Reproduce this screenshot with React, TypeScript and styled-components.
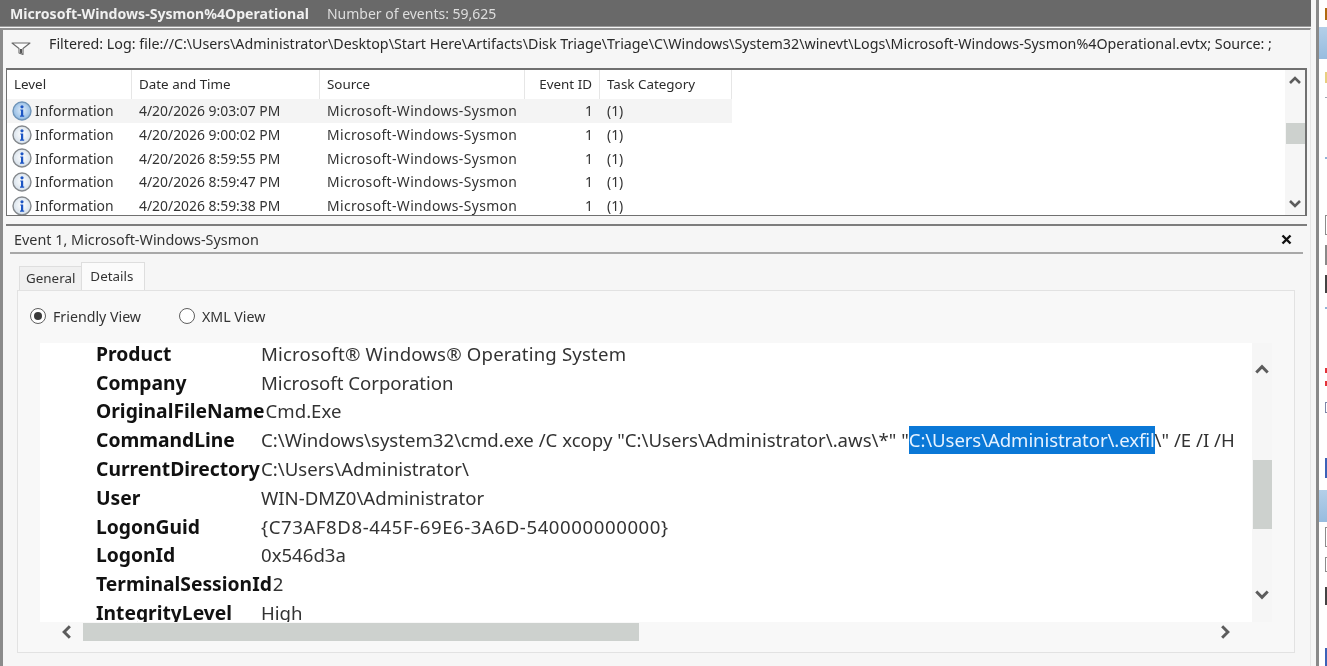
import styled, { createGlobalStyle } from "styled-components";
import { useId } from "react";

const Global = createGlobalStyle`
  html, body {
    margin: 0;
    padding: 0;
    background: #f6f6f6;
  }
`;

const Root = styled.div`
  display: flex;
  width: 1327px;
  height: 666px;
  overflow: hidden;
  font-family: "Noto Sans", "Open Sans", Arial, sans-serif;
  color: #2b2b2b;
  background: #f6f6f6;
  filter: blur(0.3px);
`;

const Main = styled.div`
  width: 1316px;
  flex: none;
  display: flex;
  flex-direction: column;
`;

const TitleBar = styled.div`
  height: 26px;
  flex: none;
  margin-right: 5px;
  display: flex;
  align-items: center;
  gap: 18px;
  padding-left: 10px;
  background: #696969;
  border-bottom: 1px solid #9a9a9a;
  font-size: 14px;
  color: #dedede;
`;

const TitleName = styled.span`
  font-weight: 700;
  color: #f0f0f0;
  font-size: 14.1px;
`;

const Body = styled.div`
  flex: 1;
  display: flex;
  flex-direction: column;
  width: 1311px;
  box-sizing: border-box;
  border-left: 3px solid #8b8b8b;
  border-right: 1px solid #e6e6e6;
  padding-left: 3px;
  padding-right: 3px;
  border-top: 2px solid #8f8f8f;
  margin-top: 1px;
  min-height: 0;
`;

const FilterBar = styled.div`
  height: 38px;
  flex: none;
  display: flex;
  gap: 18px;
  padding: 5px 0 0 5px;
  box-sizing: border-box;
  font-size: 14.25px;
  line-height: 18px;
  color: #2a2a2a;
  white-space: nowrap;
  svg {
    margin-top: 7px;
    flex: none;
  }
`;

const ListBox = styled.div`
  height: 148px;
  flex: none;
  box-sizing: border-box;
  display: flex;
  border: 1px solid #707070;
  border-top-width: 2px;
  border-right-width: 2px;
  background: #fff;
`;

const Table = styled.div`
  flex: 1;
  overflow: hidden;
`;

const Row = styled.div<{ $shade?: boolean }>`
  width: 725px;
  height: 23.7px;
  display: grid;
  grid-template-columns: 125px 188px 205px 75px 1fr;
  align-items: center;
  font-size: 13.9px;
  color: #333;
  background: ${(p) => (p.$shade ? "#f4f4f4" : "transparent")};
  white-space: nowrap;
`;

const HeaderRow = styled(Row)`
  height: 29px;
  font-size: 13.4px;
  color: #2b2b2b;
`;

const HeadCell = styled.div<{ $right?: boolean }>`
  height: 100%;
  display: flex;
  align-items: center;
  padding: 0 7px 2px;
  box-sizing: border-box;
  border-right: 1px solid #e6e6e6;
  justify-content: ${(p) => (p.$right ? "flex-end" : "flex-start")};
`;

const LevelCell = styled.div`
  display: flex;
  align-items: center;
  gap: 3px;
  padding-left: 5px;
`;

const Cell = styled.div<{ $right?: boolean; $wide?: boolean }>`
  padding: 0 7px;
  text-align: ${(p) => (p.$right ? "right" : "left")};
  letter-spacing: ${(p) => (p.$wide ? "0.38px" : "normal")};
`;

const VScroll = styled.div<{ $top: number }>`
  width: 20px;
  flex: none;
  display: flex;
  flex-direction: column;
  align-items: center;
  background: #f6f6f6;
  padding-top: ${(p) => p.$top}px;
  box-sizing: border-box;
`;

const Thumb = styled.div<{ $h: number; $top: number }>`
  width: 19px;
  height: ${(p) => p.$h}px;
  margin-top: ${(p) => p.$top}px;
  background: #cdd1ce;
  flex: none;
`;

const ArrowSlot = styled.div<{ $top: number }>`
  display: flex;
  margin-top: ${(p) => p.$top}px;
`;

const EventPane = styled.div`
  flex: 1;
  min-height: 0;
  margin-top: 8px;
  display: flex;
  flex-direction: column;
  border-top: 2px solid #7d7d7d;
`;

const EventHead = styled.div`
  height: 28px;
  flex: none;
  margin: 0 4px;
  display: flex;
  align-items: center;
  justify-content: space-between;
  padding: 0 11px 0 4px;
  border-bottom: 2px solid #a8a8a8;
  font-size: 14.4px;
  color: #333;
  box-sizing: border-box;
`;

const Tabs = styled.div`
  margin: 8px 0 0 13px;
  display: flex;
  align-items: flex-end;
  height: 28px;
  flex: none;
`;

const Tab = styled.div<{ $active?: boolean }>`
  box-sizing: border-box;
  height: ${(p) => (p.$active ? 28 : 24)}px;
  padding: ${(p) => (p.$active ? "0 11px 2px 8px" : "0 6px 2px")};
  display: flex;
  align-items: center;
  font-size: 13.4px;
  color: #333;
  background: ${(p) => (p.$active ? "#fbfbfb" : "#f0f0f0")};
  border: 1px solid #dedede;
  border-bottom: none;
  ${(p) => (p.$active ? "" : "border-right: none;")}
`;

const TabPanel = styled.div`
  width: 1278px;
  height: 363px;
  flex: none;
  margin-left: 11px;
  box-sizing: border-box;
  border: 1px solid #e2e2e2;
  background: #f8f8f8;
  padding: 13px 0 0 12px;
  display: flex;
  flex-direction: column;
`;

const RadioRow = styled.div`
  height: 24px;
  flex: none;
  display: flex;
  align-items: center;
  gap: 38px;
`;

const RadioLabel = styled.label`
  display: flex;
  align-items: center;
  gap: 7px;
  font-size: 14.2px;
  color: #333;
`;

const RadioDot = styled.span<{ $on?: boolean }>`
  width: 16px;
  height: 16px;
  box-sizing: border-box;
  border-radius: 50%;
  border: 1px solid #5f5f5f;
  background: #fff;
  display: flex;
  align-items: center;
  justify-content: center;
  &::after {
    content: "";
    width: 8px;
    height: 8px;
    border-radius: 50%;
    background: ${(p) => (p.$on ? "#3a3a3a" : "transparent")};
  }
`;

const ViewerRow = styled.div`
  margin-top: 15px;
  margin-left: 10px;
  height: 279px;
  flex: none;
  display: flex;
`;

const Viewer = styled.div`
  width: 1212px;
  flex: none;
  background: #fff;
  overflow: hidden;
`;

const FieldList = styled.div`
  margin-top: -4px;
`;

const Field = styled.div`
  height: 28.8px;
  display: flex;
  align-items: center;
  padding-left: 56px;
  font-size: 18.6px;
  color: #333;
  white-space: nowrap;
  overflow: hidden;
  width: 1196px;
  box-sizing: border-box;
`;

const FieldName = styled.span`
  font-weight: 700;
  font-size: 19.3px;
  color: #111;
  min-width: 165px;
  padding-right: 1px;
  box-sizing: border-box;
  flex: none;
`;

const FieldValue = styled.span<{ $spacing?: number }>`
  letter-spacing: ${(p) => p.$spacing ?? 0}px;
`;

const Selected = styled.span`
  background: #0a78d7;
  color: #e6f2ff;
  padding: 1px 0 2px;
  letter-spacing: -0.1px;
`;

const HScroll = styled.div`
  margin-left: 10px;
  width: 1212px;
  height: 18px;
  flex: none;
  display: flex;
  align-items: center;
  margin-top: 1px;
  padding-left: 19px;
  box-sizing: border-box;
  gap: 8px;
`;

const HThumb = styled.div`
  width: 556px;
  height: 18px;
  background: #cdd1ce;
`;

const HRight = styled.div`
  margin-left: auto;
  margin-right: 19px;
  display: flex;
`;

const Divider = styled.div`
  width: 3px;
  flex: none;
  background: #8a8a8a;
`;

const Strip = styled.div`
  flex: 1;
  background: #fff;
  display: flex;
  flex-direction: column;
  align-items: flex-end;
  overflow: hidden;
`;

const Mark = styled.div<{ $h: number; $top: number; $c: string; $outline?: boolean }>`
  flex: none;
  width: 2px;
  height: ${(p) => p.$h}px;
  margin-top: ${(p) => p.$top}px;
  background: ${(p) => (p.$outline ? "transparent" : p.$c)};
  ${(p) => (p.$outline ? `border: 1px solid ${p.$c}; border-right: none; box-sizing: border-box;` : "")}
`;

const BlueBar = styled.div<{ $top: number }>`
  flex: none;
  width: 100%;
  height: 32px;
  margin-top: ${(p) => p.$top}px;
  background: linear-gradient(#b4cfe8, #97bcdf);
`;

function InfoIcon({ active }: { active?: boolean }) {
  const id = useId();
  return (
    <svg width="20" height="20" viewBox="0 0 20 20">
      <defs>
        <radialGradient id={id} cx="50%" cy="45%" r="55%">
          <stop offset="0%" stopColor={active ? "#e2eefa" : "#ffffff"} />
          <stop offset="100%" stopColor={active ? "#8db8e2" : "#d4dfea"} />
        </radialGradient>
      </defs>
      <circle cx="10" cy="10" r="9" fill={`url(#${id})`} stroke={active ? "#6f94b8" : "#85898d"} strokeWidth="1.4" />
      <circle cx="10" cy="5.8" r="1.6" fill="#1c55c4" />
      <path d="M8.3 8.4h2.9v6.2h1v1.2H8v-1.2h1V9.6H8.3z" fill="#1c55c4" />
    </svg>
  );
}

function FunnelIcon() {
  return (
    <svg width="20" height="13" viewBox="0 0 20 13">
      <path d="M1 1h18L12 6.500V12.500L8 11V6.500z" fill="#fdfdfd" stroke="#6a6a6a" strokeWidth="1.1" strokeLinejoin="round" />
      <path d="M9 7h2v4.500l-2-.8z" fill="#555" />
    </svg>
  );
}

function Chevron({ dir, size = 14 }: { dir: "up" | "down" | "left" | "right"; size?: number }) {
  const paths = {
    up: "M2 10l5-5 5 5",
    down: "M2 4l5 5 5-5",
    left: "M9.500 2l-5 5 5 5",
    right: "M4.500 2l5 5-5 5",
  };
  return (
    <svg width={size} height={size} viewBox="0 0 14 14" fill="none">
      <path d={paths[dir]} stroke="#5c5c5c" strokeWidth="2.600" />
    </svg>
  );
}

function CloseIcon() {
  return (
    <svg width="11" height="11" viewBox="0 0 11 11">
      <path d="M1.500 1.500l8 8M9.500 1.500l-8 8" stroke="#111" strokeWidth="2.400" />
    </svg>
  );
}

const events = [
  "4/20/2026 9:03:07 PM",
  "4/20/2026 9:00:02 PM",
  "4/20/2026 8:59:55 PM",
  "4/20/2026 8:59:47 PM",
  "4/20/2026 8:59:38 PM",
];

const fields: { name: string; value: string; spacing?: number }[] = [
  { name: "Product", value: "Microsoft® Windows® Operating System", spacing: 0.17 },
  { name: "Company", value: "Microsoft Corporation" },
  { name: "OriginalFileName", value: "Cmd.Exe" },
  { name: "CommandLine", value: "" },
  { name: "CurrentDirectory", value: "C:\\Users\\Administrator\\" },
  { name: "User", value: "WIN-DMZ0\\Administrator" },
  { name: "LogonGuid", value: "{C73AF8D8-445F-69E6-3A6D-540000000000}", spacing: 0.58 },
  { name: "LogonId", value: "0x546d3a" },
  { name: "TerminalSessionId", value: "2" },
  { name: "IntegrityLevel", value: "High" },
];

export default function App() {
  return (
    <Root>
      <Global />
      <Main>
        <TitleBar>
          <TitleName>Microsoft-Windows-Sysmon%4Operational</TitleName>
          <span>Number of events: 59,625</span>
        </TitleBar>
        <Body>
          <FilterBar>
            <FunnelIcon />
            <span>
              Filtered: Log: file://C:\Users\Administrator\Desktop\Start Here\Artifacts\Disk Triage\Triage\C\Windows\System32\winevt\Logs\Microsoft-Windows-Sysmon%4Operational.evtx; Source: ;
            </span>
          </FilterBar>
          <ListBox>
            <Table>
              <HeaderRow>
                <HeadCell>Level</HeadCell>
                <HeadCell>Date and Time</HeadCell>
                <HeadCell>Source</HeadCell>
                <HeadCell $right>Event ID</HeadCell>
                <HeadCell>Task Category</HeadCell>
              </HeaderRow>
              {events.map((time, i) => (
                <Row key={time} $shade={i === 0}>
                  <LevelCell>
                    <InfoIcon active={i === 0} />
                    Information
                  </LevelCell>
                  <Cell>{time}</Cell>
                  <Cell $wide>Microsoft-Windows-Sysmon</Cell>
                  <Cell $right>1</Cell>
                  <Cell>(1)</Cell>
                </Row>
              ))}
            </Table>
            <VScroll $top={3}>
              <Chevron dir="up" />
              <Thumb $h={21} $top={36} />
              <ArrowSlot $top={53}>
                <Chevron dir="down" />
              </ArrowSlot>
            </VScroll>
          </ListBox>
          <EventPane>
            <EventHead>
              <span>Event 1, Microsoft-Windows-Sysmon</span>
              <CloseIcon />
            </EventHead>
            <Tabs>
              <Tab>General</Tab>
              <Tab $active>Details</Tab>
            </Tabs>
            <TabPanel>
              <RadioRow>
                <RadioLabel>
                  <RadioDot $on />
                  Friendly View
                </RadioLabel>
                <RadioLabel>
                  <RadioDot />
                  XML View
                </RadioLabel>
              </RadioRow>
              <ViewerRow>
                <Viewer>
                  <FieldList>
                    {fields.map(({ name, value, spacing }) => (
                      <Field key={name}>
                        <FieldName>{name}</FieldName>
                        {name === "CommandLine" ? (
                          <FieldValue>
                            C:\Windows\system32\cmd.exe /C xcopy "C:\Users\Administrator\.aws\*" "
                            <Selected>C:\Users\Administrator\.exfil</Selected>\" /E /I /H
                          </FieldValue>
                        ) : (
                          <FieldValue $spacing={spacing}>{value}</FieldValue>
                        )}
                      </Field>
                    ))}
                  </FieldList>
                </Viewer>
                <VScroll $top={18}>
                  <Chevron dir="up" size={16} />
                  <Thumb $h={69} $top={83} />
                  <ArrowSlot $top={58}>
                    <Chevron dir="down" size={16} />
                  </ArrowSlot>
                </VScroll>
              </ViewerRow>
              <HScroll>
                <Chevron dir="left" size={16} />
                <HThumb />
                <HRight>
                  <Chevron dir="right" size={16} />
                </HRight>
              </HScroll>
            </TabPanel>
          </EventPane>
        </Body>
      </Main>
      <Divider />
      <Strip>
        <Mark $h={12} $top={8} $c="#b06a10" />
        <BlueBar $top={7} />
        <Mark $h={11} $top={13} $c="#e8cf80" />
        <Mark $h={1} $top={14} $c="#9aa6b4" />
        <Mark $h={2} $top={59} $c="#8fb4d8" />
        <Mark $h={20} $top={56} $c="#8c8c8c" $outline />
        <Mark $h={20} $top={10} $c="#8a8a8a" />
        <Mark $h={18} $top={10} $c="#444" />
        <Mark $h={2} $top={14} $c="#8fb4d8" />
        <Mark $h={5} $top={59} $c="#e4343a" />
        <Mark $h={5} $top={8} $c="#e4343a" />
        <Mark $h={11} $top={16} $c="#7d86a8" $outline />
        <Mark $h={20} $top={45} $c="#3c62b8" />
        <BlueBar $top={12} />
        <Mark $h={20} $top={5} $c="#8c8c8c" $outline />
        <Mark $h={15} $top={10} $c="#8c8c8c" $outline />
        <Mark $h={18} $top={15} $c="#444" />
        <Mark $h={18} $top={43} $c="#3c62b8" />
      </Strip>
    </Root>
  );
}
